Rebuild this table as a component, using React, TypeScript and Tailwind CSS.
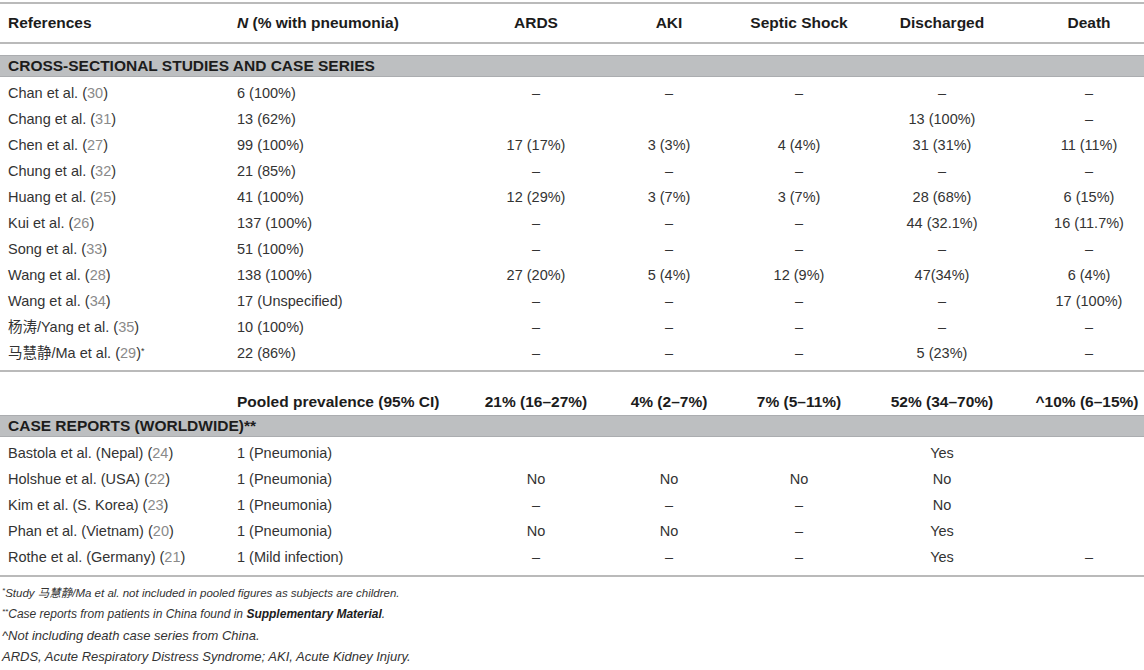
const cols =
  "grid grid-cols-[229px_233px_148px_118px_142px_144px_130px] items-center";

type Row = {
  name: string;
  refNo: string;
  suffix?: string;
  n: string;
  ards?: string;
  aki?: string;
  septic?: string;
  discharged?: string;
  death?: string;
};

const cross: Row[] = [
  { name: "Chan et al.", refNo: "30", n: "6 (100%)", ards: "–", aki: "–", septic: "–", discharged: "–", death: "–" },
  { name: "Chang et al.", refNo: "31", n: "13 (62%)", discharged: "13 (100%)", death: "–" },
  { name: "Chen et al.", refNo: "27", n: "99 (100%)", ards: "17 (17%)", aki: "3 (3%)", septic: "4 (4%)", discharged: "31 (31%)", death: "11 (11%)" },
  { name: "Chung et al.", refNo: "32", n: "21 (85%)", ards: "–", aki: "–", septic: "–", discharged: "–", death: "–" },
  { name: "Huang et al.", refNo: "25", n: "41 (100%)", ards: "12 (29%)", aki: "3 (7%)", septic: "3 (7%)", discharged: "28 (68%)", death: "6 (15%)" },
  { name: "Kui et al.", refNo: "26", n: "137 (100%)", ards: "–", aki: "–", septic: "–", discharged: "44 (32.1%)", death: "16 (11.7%)" },
  { name: "Song et al.", refNo: "33", n: "51 (100%)", ards: "–", aki: "–", septic: "–", discharged: "–", death: "–" },
  { name: "Wang et al.", refNo: "28", n: "138 (100%)", ards: "27 (20%)", aki: "5 (4%)", septic: "12 (9%)", discharged: "47(34%)", death: "6 (4%)" },
  { name: "Wang et al.", refNo: "34", n: "17 (Unspecified)", ards: "–", aki: "–", septic: "–", discharged: "–", death: "17 (100%)" },
  { name: "杨涛/Yang et al.", refNo: "35", n: "10 (100%)", ards: "–", aki: "–", septic: "–", discharged: "–", death: "–" },
  { name: "马慧静/Ma et al.", refNo: "29", suffix: "*", n: "22 (86%)", ards: "–", aki: "–", septic: "–", discharged: "5 (23%)", death: "–" },
];

const cases: Row[] = [
  { name: "Bastola et al. (Nepal)", refNo: "24", n: "1 (Pneumonia)", discharged: "Yes" },
  { name: "Holshue et al. (USA)", refNo: "22", n: "1 (Pneumonia)", ards: "No", aki: "No", septic: "No", discharged: "No" },
  { name: "Kim et al. (S. Korea)", refNo: "23", n: "1 (Pneumonia)", ards: "–", aki: "–", septic: "–", discharged: "No" },
  { name: "Phan et al. (Vietnam)", refNo: "20", n: "1 (Pneumonia)", ards: "No", aki: "No", septic: "–", discharged: "Yes" },
  { name: "Rothe et al. (Germany)", refNo: "21", n: "1 (Mild infection)", ards: "–", aki: "–", septic: "–", discharged: "Yes", death: "–" },
];

function DataRow({ r }: { r: Row }) {
  return (
    <div className={`${cols} h-[26px] text-[14.5px] text-[#333]`}>
      <div className="pl-2 whitespace-nowrap">
        {r.name} (<span className="text-[#8a8a8a]">{r.refNo}</span>)
        {r.suffix && <sup className="text-[9px]">{r.suffix}</sup>}
      </div>
      <div className="pl-2">{r.n}</div>
      <div className="text-center">{r.ards}</div>
      <div className="text-center">{r.aki}</div>
      <div className="text-center">{r.septic}</div>
      <div className="text-center">{r.discharged}</div>
      <div className="pl-5 text-center">{r.death}</div>
    </div>
  );
}

function Band({ label }: { label: string }) {
  return (
    <div className="h-[22px] bg-[#bdbfc1] border-y border-[#abadb0] flex items-center pl-2 text-[15.5px] font-bold text-[#1c1c1c]">
      {label}
    </div>
  );
}

export default function App() {
  return (
    <div
      className="w-[1144px] h-[670px] bg-white pt-[2px] overflow-hidden"
      style={{ fontFamily: '"Liberation Sans", Arial, "Noto Sans CJK SC", sans-serif' }}
    >
      <div className={`${cols} h-[42px] border-y-2 border-[#bababa] text-[15.5px] font-bold text-[#1c1c1c]`}>
        <div className="pl-2">References</div>
        <div className="pl-2">
          <i>N</i> (% with pneumonia)
        </div>
        <div className="text-center">ARDS</div>
        <div className="text-center">AKI</div>
        <div className="text-center">Septic Shock</div>
        <div className="text-center">Discharged</div>
        <div className="pl-5 text-center">Death</div>
      </div>

      <div className="mt-[11px]">
        <Band label="CROSS-SECTIONAL STUDIES AND CASE SERIES" />
      </div>

      <div className="mt-[4px]">
        {cross.map((r, i) => (
          <DataRow key={i} r={r} />
        ))}
      </div>

      <div className="mt-[3px] border-t-2 border-[#bababa]" />

      <div className={`${cols} h-[26px] mt-[17px] text-[15.5px] font-bold text-[#1c1c1c] whitespace-nowrap`}>
        <div />
        <div className="pl-2">Pooled prevalence (95% CI)</div>
        <div className="text-center">21% (16–27%)</div>
        <div className="text-center">4% (2–7%)</div>
        <div className="text-center">7% (5–11%)</div>
        <div className="text-center">52% (34–70%)</div>
        <div className="pl-4 text-center">^10% (6–15%)</div>
      </div>

      <Band label="CASE REPORTS (WORLDWIDE)**" />

      <div className="mt-[4px]">
        {cases.map((r, i) => (
          <DataRow key={i} r={r} />
        ))}
      </div>

      <div className="mt-[4px] border-t-2 border-[#bababa]" />

      <div className="mt-[6px] pl-[2px] leading-[21px] italic text-[#333] whitespace-nowrap">
        <div className="text-[11.5px]">
          <sup className="text-[8px]">*</sup>Study 马慧静/Ma et al. not included in pooled figures as subjects are children.
        </div>
        <div className="text-[12px]">
          <sup className="text-[8px]">**</sup>Case reports from patients in China found in{" "}
          <b className="text-[#1c1c1c]">Supplementary Material</b>.
        </div>
        <div className="text-[13px]">^Not including death case series from China.</div>
        <div className="text-[13px]">ARDS, Acute Respiratory Distress Syndrome; AKI, Acute Kidney Injury.</div>
      </div>
    </div>
  );
}
